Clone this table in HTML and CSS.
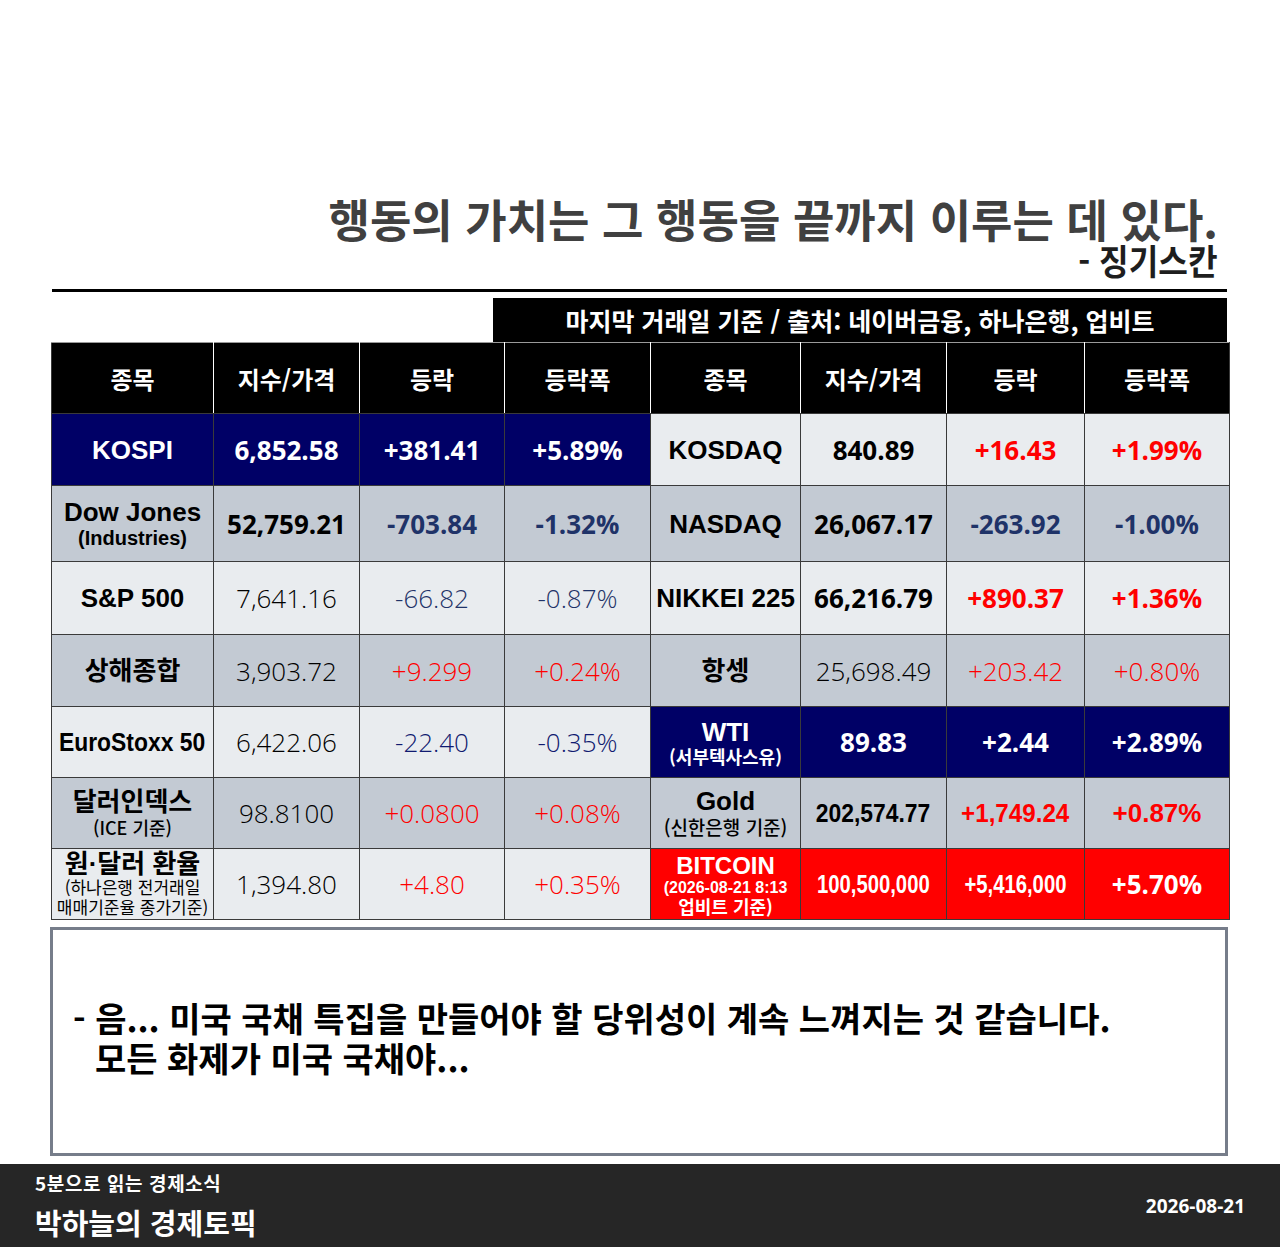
FILE: index.html
```html
<!DOCTYPE html>
<html lang="ko">
<head>
<meta charset="utf-8">
<title>박하늘의 경제토픽</title>
<link rel="stylesheet" href="styles.css">
</head>
<body>
<div class="page">
  <header class="quote">
    <div class="q-line q-main"><span class="q-text">행동의 가치는 그 행동을 끝까지 이루는 데 있다.</span></div>
    <div class="q-line q-by"><span class="q-text">- 징기스칸</span></div>
  </header>
  <div class="rule"></div>
  <div class="banner">마지막 거래일 기준 / 출처: 네이버금융, 하나은행, 업비트</div>

  <table class="market">
    <colgroup>
      <col class="c1"><col class="c2"><col class="c3"><col class="c4">
      <col class="c5"><col class="c6"><col class="c7"><col class="c8">
    </colgroup>
    <thead>
      <tr>
        <th>종목</th><th>지수/가격</th><th>등락</th><th>등락폭</th>
        <th>종목</th><th>지수/가격</th><th>등락</th><th>등락폭</th>
      </tr>
    </thead>
    <tbody>
      <tr class="r1">
        <td class="nv name">KOSPI</td>
        <td class="nv num b">6,852.58</td>
        <td class="nv num b">+381.41</td>
        <td class="nv num b">+5.89%</td>
        <td class="lt name">KOSDAQ</td>
        <td class="lt num b">840.89</td>
        <td class="lt num b up">+16.43</td>
        <td class="lt num b up">+1.99%</td>
      </tr>
      <tr class="r2">
        <td class="dk name">Dow Jones<span class="sub sub-en">(Industries)</span></td>
        <td class="dk num b">52,759.21</td>
        <td class="dk num b dn">-703.84</td>
        <td class="dk num b dn">-1.32%</td>
        <td class="dk name">NASDAQ</td>
        <td class="dk num b">26,067.17</td>
        <td class="dk num b dn">-263.92</td>
        <td class="dk num b dn">-1.00%</td>
      </tr>
      <tr class="r3">
        <td class="lt name">S&amp;P 500</td>
        <td class="lt num th">7,641.16</td>
        <td class="lt num th dn">-66.82</td>
        <td class="lt num th dn">-0.87%</td>
        <td class="lt name">NIKKEI 225</td>
        <td class="lt num b">66,216.79</td>
        <td class="lt num b up">+890.37</td>
        <td class="lt num b up">+1.36%</td>
      </tr>
      <tr class="r4">
        <td class="dk name">상해종합</td>
        <td class="dk num th">3,903.72</td>
        <td class="dk num th up">+9.299</td>
        <td class="dk num th up">+0.24%</td>
        <td class="dk name">항셍</td>
        <td class="dk num th">25,698.49</td>
        <td class="dk num th up">+203.42</td>
        <td class="dk num th up">+0.80%</td>
      </tr>
      <tr class="r5">
        <td class="lt name"><span class="squeeze sq88">EuroStoxx 50</span></td>
        <td class="lt num th">6,422.06</td>
        <td class="lt num th dn2">-22.40</td>
        <td class="lt num th dn2">-0.35%</td>
        <td class="nv name">WTI<span class="sub sub-ko">(서부텍사스유)</span></td>
        <td class="nv num b">89.83</td>
        <td class="nv num b">+2.44</td>
        <td class="nv num b">+2.89%</td>
      </tr>
      <tr class="r6">
        <td class="dk name">달러인덱스<span class="sub sub-ko2">(ICE 기준)</span></td>
        <td class="dk num th">98.8100</td>
        <td class="dk num th up">+0.0800</td>
        <td class="dk num th up">+0.08%</td>
        <td class="dk name">Gold<span class="sub sub-ko3">(신한은행 기준)</span></td>
        <td class="dk num ar"><span class="squeeze sq88">202,574.77</span></td>
        <td class="dk num ar up"><span class="squeeze sq93">+1,749.24</span></td>
        <td class="dk num ar up">+0.87%</td>
      </tr>
      <tr class="r7">
        <td class="lt name fx">원·달러 환율<span class="sub sub-fx">(하나은행 전거래일</span><span class="sub sub-fx">매매기준율 종가기준)</span></td>
        <td class="lt num th">1,394.80</td>
        <td class="lt num th up">+4.80</td>
        <td class="lt num th up">+0.35%</td>
        <td class="rd name btc">BITCOIN<span class="sub sub-btc">(2026-08-21 8:13</span><span class="sub sub-btc2">업비트 기준)</span></td>
        <td class="rd num ar"><span class="squeeze sq77">100,500,000</span></td>
        <td class="rd num ar"><span class="squeeze sq77">+5,416,000</span></td>
        <td class="rd num b">+5.70%</td>
      </tr>
    </tbody>
  </table>

  <section class="memo">
    <div class="memo-line">- 음... 미국 국채 특집을 만들어야 할 당위성이 계속 느껴지는 것 같습니다.</div>
    <div class="memo-line memo-indent">모든 화제가 미국 국채야...</div>
  </section>

  <footer class="footer">
    <div class="brand">
      <div class="brand-sub">5분으로 읽는 경제소식</div>
      <div class="brand-main">박하늘의 경제토픽</div>
    </div>
    <div class="date">2026-08-21</div>
  </footer>
</div>
</body>
</html>
```
FILE: styles.css
```css
* { box-sizing: border-box; }
html, body { margin: 0; padding: 0; background: #ffffff; }
body {
  width: 1280px;
  height: 1247px;
  overflow: hidden;
  font-family: "Noto Sans CJK KR", "Noto Sans", sans-serif;
}
.page { width: 1280px; }

/* quote */
.quote { padding: 196px 62px 0 0; }
.q-line { text-align: right; white-space: nowrap; }
.q-text { display: inline-block; transform-origin: right center; font-weight: 700; }
.q-main { font-size: 45px; line-height: 45px; color: #404040; }
.q-by { font-size: 35px; line-height: 35px; color: #1e1e1e; margin-top: 1px; }
.q-by .q-text { transform: scaleX(0.92); }

.rule {
  height: 3px;
  background: #000;
  margin: 12px 53px 0 52px;
}
.banner {
  margin: 6px 0 0 493px;
  width: 734px;
  height: 44px;
  background: #000;
  color: #fff;
  font-weight: 700;
  font-size: 25px;
  line-height: 44px;
  text-align: center;
  white-space: nowrap;
}

/* table */
.market {
  margin-left: 51px;
  width: 1178px;
  border-collapse: collapse;
  table-layout: fixed;
  font-family: "Liberation Sans", "Noto Sans CJK KR", sans-serif;
}
.c1 { width: 162px; } .c2 { width: 146px; } .c3 { width: 145px; } .c4 { width: 146px; }
.c5 { width: 150px; } .c6 { width: 146px; } .c7 { width: 138px; } .c8 { width: 145px; }

.market th {
  height: 71px;
  background: #000;
  color: #fff;
  font-family: "Noto Sans CJK KR", sans-serif;
  font-weight: 700;
  font-size: 24px;
  border-top: 1px solid #9a9a9a;
  border-left: 1px solid #ffffff;
  border-right: 1px solid #ffffff;
  border-bottom: 1px solid #3a3a3a;
  padding: 0;
}
.market th:first-child { border-left: 1px solid #3a3a3a; }
.market th:last-child { border-right: 1px solid #3a3a3a; }

.market td {
  border: 1px solid #3a3a3a;
  text-align: center;
  vertical-align: middle;
  padding: 0;
  white-space: nowrap;
  overflow: visible;
}
.r1 td { height: 72px; }
.r2 td { height: 76px; }
.r3 td { height: 73px; }
.r4 td { height: 72px; }
.r5 td { height: 71px; }
.r6 td { height: 71px; }
.r7 td { height: 71px; }

.lt { background: #e9ecef; color: #000; }
.dk { background: #c3cad3; color: #000; }
.nv { background: #000066; color: #fff; }
.rd { background: #ff0000; color: #fff; }

.name {
  font-weight: 700;
  font-size: 26px;
  line-height: 28px;
}
.sub { display: block; font-weight: 700; }
.sub-en { font-size: 20px; line-height: 24px; }
.sub-ko { font-size: 18px; line-height: 20px; font-family: "Noto Sans CJK KR", sans-serif; }
.sub-ko2 { font-size: 18px; line-height: 22px; font-weight: 500; font-family: "Noto Sans CJK KR", sans-serif; }
.sub-ko3 { font-size: 19px; line-height: 24px; font-weight: 500; font-family: "Noto Sans CJK KR", sans-serif; }
.fx { line-height: 26px; }
.sub-fx { font-size: 17px; line-height: 20px; font-weight: 400; font-family: "Noto Sans CJK KR", sans-serif; }
.btc { line-height: 26px; font-size: 24px; }
.sub-btc { font-size: 16px; line-height: 18px; }
.sub-btc2 { font-size: 18px; line-height: 19px; font-family: "Noto Sans CJK KR", sans-serif; }

.num {
  font-family: "Open Sans", "Noto Sans", sans-serif;
  font-size: 26px;
}
.num.b { font-weight: 700; }
.num.th { font-weight: 300; }
.num.ar { font-family: "Liberation Sans", sans-serif; font-weight: 700; font-size: 26px; }
.up { color: #ff0000; }
.nv.up, .rd.up { color: #fff; }
.dn { color: #1f3368; }
.dn2 { color: #101a70; }

.squeeze { display: inline-block; transform-origin: center center; }
.sq88 { transform: scaleX(0.88); }
.sq93 { transform: scaleX(0.93); }
.sq77 { transform: scaleX(0.78); }
.name .sq88 { margin: 0 -10px; }

/* memo box */
.memo {
  margin: 7px 0 0 50px;
  width: 1178px;
  height: 229px;
  border: 3px solid #767d8a;
  padding: 68px 0 0 20px;
  font-weight: 700;
  font-size: 34px;
  line-height: 40px;
  color: #000;
  white-space: nowrap;
}
.memo-indent { padding-left: 22px; }

/* footer */
.footer {
  margin-top: 8px;
  height: 83px;
  background: #262626;
  color: #fff;
  display: flex;
  justify-content: space-between;
  align-items: center;
  padding: 0 35px;
}
.brand { align-self: flex-start; padding-top: 7px; }
.brand-sub { font-size: 19px; line-height: 24px; font-weight: 700; letter-spacing: 0.6px; }
.brand-main { font-size: 29px; line-height: 34px; font-weight: 700; margin-top: 10px; }
.date {
  font-family: "Open Sans", "Noto Sans", sans-serif;
  font-weight: 700;
  font-size: 19px;
  line-height: 24px;
}
```
